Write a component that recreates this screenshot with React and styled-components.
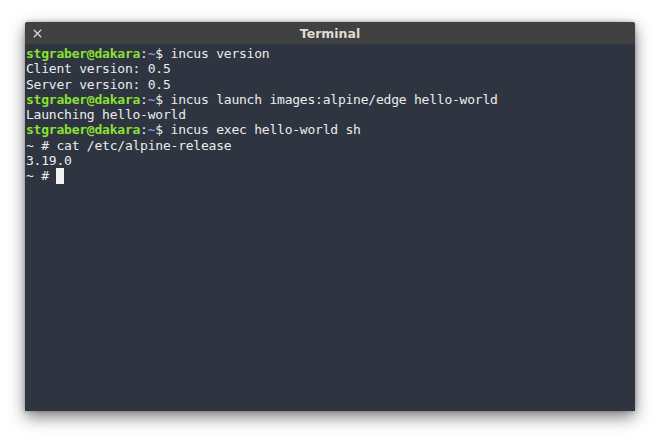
import React from 'react'
import styled, { createGlobalStyle } from 'styled-components'

const GlobalStyle = createGlobalStyle`
    html, body {
        margin: 0;
        padding: 0;
        background: #ffffff;
    }
`;

const lines = [
    { prompt: true, cmd: 'incus version' },
    { text: 'Client version: 0.5' },
    { text: 'Server version: 0.5' },
    { prompt: true, cmd: 'incus launch images:alpine/edge hello-world' },
    { text: 'Launching hello-world' },
    { prompt: true, cmd: 'incus exec hello-world sh' },
    { text: '~ # cat /etc/alpine-release' },
    { text: '3.19.0' },
]

function App() {
    return (
        <Page>
            <GlobalStyle />
            <Window>
                <TitleBar>
                    <CloseButton>
                        <svg width="9" height="9" viewBox="0 0 9 9">
                            <path d="M0.8 0.8 L8.2 8.2 M8.2 0.8 L0.8 8.2" stroke="#d8d8d8" strokeWidth="1.3" />
                        </svg>
                    </CloseButton>
                    <Title>Terminal</Title>
                </TitleBar>
                <Screen>
                    {lines.map((line, index) => (
                        <Line key={index}>
                            {line.prompt ? (
                                <>
                                    <User>stgraber@dakara</User>:<Path>~</Path>$ {line.cmd}
                                </>
                            ) : line.text}
                        </Line>
                    ))}
                    <Line>~ # <Cursor /></Line>
                </Screen>
            </Window>
        </Page>
    )
}

export default App

const Page = styled.div`
    width: 660px;
    height: 439px;
    padding: 22px 25px 0;
    box-sizing: border-box;
`;

const Window = styled.div`
    width: 610px;
    height: 389px;
    display: flex;
    flex-direction: column;
    background: #2e3541;
    border-radius: 3px 3px 0 0;
    overflow: hidden;
    box-shadow: 0 6px 16px rgba(0, 0, 0, 0.5), 0 0 4px rgba(0, 0, 0, 0.25);
`;

const TitleBar = styled.div`
    height: 22px;
    flex-shrink: 0;
    background: #414141;
    position: relative;
    display: flex;
    align-items: center;
    justify-content: center;
`;

const CloseButton = styled.div`
    position: absolute;
    left: 8px;
    top: 7px;
    display: flex;
`;

const Title = styled.div`
    font-family: "DejaVu Sans", sans-serif;
    font-weight: bold;
    font-size: 12.5px;
    color: #dfdbd2;
`;

const Screen = styled.div`
    flex: 1;
    padding: 2px 1px 0;
    font-family: "DejaVu Sans Mono", monospace;
    font-size: 13px;
    letter-spacing: -0.22px;
    line-height: 15.25px;
    color: #ececec;
    white-space: pre;
`;

const Line = styled.div`
    height: 15.25px;
    display: flex;
    align-items: center;
`;

const User = styled.span`
    color: #8ae234;
    font-weight: bold;
`;

const Path = styled.span`
    color: #729fcf;
    font-weight: bold;
`;

const Cursor = styled.span`
    display: inline-block;
    width: 8px;
    height: 16px;
    background: #f2f2f2;
`;
